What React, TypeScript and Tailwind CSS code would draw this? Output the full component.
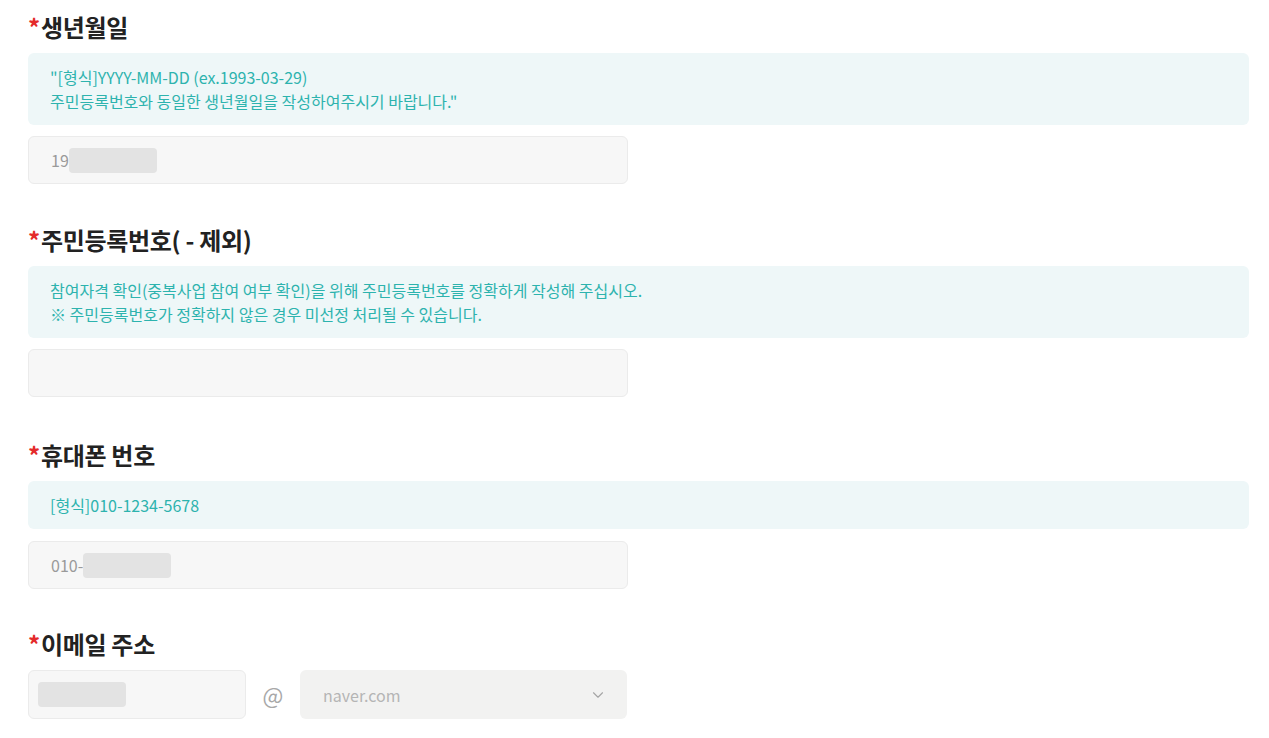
import { ChevronDown } from "lucide-react";

const font = { fontFamily: '"Noto Sans CJK KR", "Noto Sans", sans-serif' };

function Label({ children }: { children: React.ReactNode }) {
  return (
    <h3 className="flex h-[30px] items-center text-[24px] font-bold leading-[30px] tracking-[-0.3px] text-[#222]">
      <span className="mr-[1px] text-[#e42a2a]">*</span>
      {children}
    </h3>
  );
}

function Notice({ lines }: { lines: string[] }) {
  return (
    <div className="mt-[11px] rounded-[6px] bg-[#eef7f8] px-[22px] py-[12px] text-[16px] leading-[24px] text-[#2db3ae]">
      {lines.map((l) => (
        <p key={l}>{l}</p>
      ))}
    </div>
  );
}

function Masked({ prefix, width }: { prefix?: string; width: number }) {
  return (
    <div className="mt-[11px] flex h-[48px] w-[600px] items-center rounded-[6px] border border-[#ebebeb] bg-[#f7f7f7] px-[22px] text-[16px] text-[#9a9a9a]">
      {prefix && <span>{prefix}</span>}
      {width > 0 && <span className="h-[25px] rounded-[4px] bg-[#e3e3e3]" style={{ width }} />}
    </div>
  );
}

export default function App() {
  return (
    <div className="min-h-screen bg-white pl-[28px] pr-[20px] pt-[12px]" style={font}>
      <section>
        <Label>생년월일</Label>
        <Notice lines={['"[형식]YYYY-MM-DD (ex.1993-03-29)', '주민등록번호와 동일한 생년월일을 작성하여주시기 바랍니다."']} />
        <Masked prefix="19" width={88} />
      </section>

      <section className="mt-[41px]">
        <Label>주민등록번호( - 제외)</Label>
        <Notice
          lines={[
            "참여자격 확인(중복사업 참여 여부 확인)을 위해 주민등록번호를 정확하게 작성해 주십시오.",
            "※ 주민등록번호가 정확하지 않은 경우 미선정 처리될 수 있습니다.",
          ]}
        />
        <Masked width={0} />
      </section>

      <section className="mt-[43px]">
        <Label>휴대폰 번호</Label>
        <Notice lines={["[형식]010-1234-5678"]} />
        <div className="pt-px">
          <Masked prefix="010-" width={88} />
        </div>
      </section>

      <section className="mt-[40px]">
        <Label>이메일 주소</Label>
        <div className="mt-[11px] flex items-center">
          <div className="flex h-[49px] w-[218px] items-center rounded-[6px] border border-[#ebebeb] bg-[#f7f7f7] px-[9px]">
            <span className="h-[25px] w-[88px] rounded-[4px] bg-[#e3e3e3]" />
          </div>
          <span className="w-[54px] text-center text-[22px] text-[#a8a8a8]">@</span>
          <div className="flex h-[49px] w-[327px] items-center justify-between rounded-[6px] bg-[#f2f2f1] pl-[23px] pr-[20px] text-[16px] text-[#b5b5b5]">
            <span>naver.com</span>
            <ChevronDown className="h-[18px] w-[18px] text-[#a5a5a5]" strokeWidth={1.5} />
          </div>
        </div>
      </section>
    </div>
  );
}
